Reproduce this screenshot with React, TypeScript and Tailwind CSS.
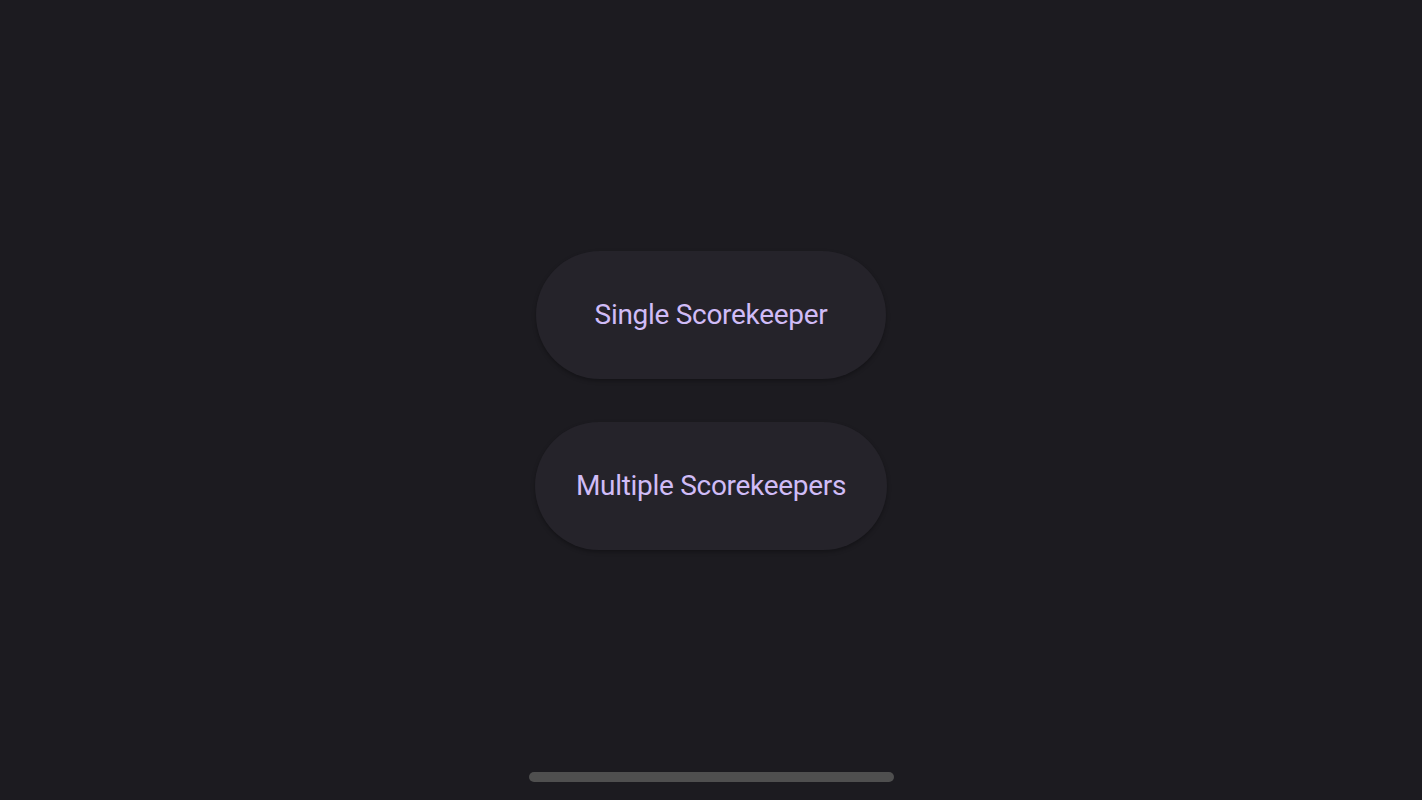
export default function App() {
  return (
    <div className="relative h-[800px] w-[1422px] overflow-hidden bg-[#1c1b20] font-['Roboto',sans-serif]">
      <div className="flex h-full flex-col items-center justify-center gap-[43px]">
        <button
          type="button"
          className="flex h-[128px] w-[350px] items-center justify-center rounded-full bg-[#25232a] text-[28px] leading-none tracking-[-0.3px] text-[#d0bcf7] shadow-[0_2px_4px_rgba(0,0,0,0.3)]"
        >
          Single Scorekeeper
        </button>
        <button
          type="button"
          className="flex h-[128px] w-[352px] items-center justify-center rounded-full bg-[#25232a] text-[28px] leading-none tracking-[-0.3px] text-[#d0bcf7] shadow-[0_2px_4px_rgba(0,0,0,0.3)]"
        >
          Multiple Scorekeepers
        </button>
      </div>
      <div className="absolute bottom-[18px] left-[529px] h-[10px] w-[365px] rounded-full bg-[#4f4f4f]" />
    </div>
  );
}
